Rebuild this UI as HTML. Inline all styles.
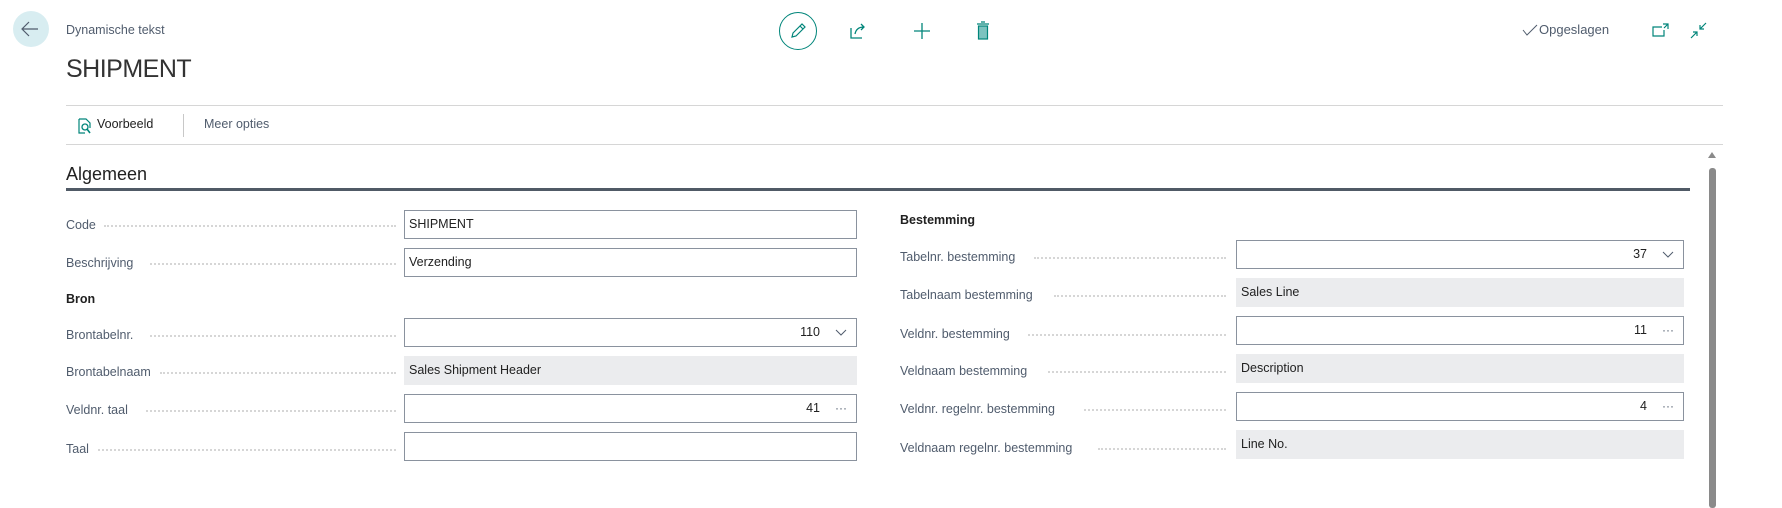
<!DOCTYPE html>
<html><head><meta charset="utf-8"><style>
*{box-sizing:border-box;margin:0;padding:0}
body{width:1782px;height:503px;background:#fff;font-family:"Segoe UI","Liberation Sans",sans-serif;color:#212121;position:relative;overflow:hidden}
.a{position:absolute;white-space:nowrap}
.lbl{font-size:12.5px;color:#505c6d;line-height:16px}
.dots{position:absolute;border-top:2px dotted #d6d6d6;height:0}
.box{position:absolute;height:29px;border:1px solid #8a929e;background:#fff;font-size:12.5px;line-height:27px;padding:0 4px;color:#212121}
.ro{position:absolute;height:29px;background:#ebecee;font-size:12.5px;line-height:29px;padding:0 5px;color:#212121}
.r{text-align:right;padding-right:36px}
.sfx{position:absolute;right:9px;top:0;color:#505c6d;font-size:12px}
</style></head><body>
<div class="a" style="left:13px;top:11px;width:36px;height:36px;border-radius:50%;background:#d8edf1"></div>
<svg class="a" style="left:21px;top:21px" width="18" height="16" viewBox="0 0 18 16"><path d="M17 8H2M8 1L1 8l7 7" fill="none" stroke="#505c6d" stroke-width="1.2"/></svg>
<div class="a" style="left:66px;top:23px;font-size:12.5px;color:#505c6d">Dynamische tekst</div>
<div class="a" style="left:66px;top:55px;font-size:25px;font-weight:300;color:#333;letter-spacing:-0.5px">SHIPMENT</div>

<div class="a" style="left:779px;top:12px;width:38px;height:38px;border-radius:50%;border:1.3px solid #00857a"></div>
<svg class="a" style="left:788px;top:21px" width="20" height="20" viewBox="0 0 20 20"><path d="M4 16l1-4 9-9 3 3-9 9z M12 5l3 3" fill="none" stroke="#00857a" stroke-width="1.2"/></svg>
<svg class="a" style="left:850px;top:23px" width="18" height="16" viewBox="0 0 18 16"><path d="M1 5v10h11 M5 11c1-5 4-7 9-7M11 1l3 3-3 3" fill="none" stroke="#00857a" stroke-width="1.3"/></svg>
<svg class="a" style="left:913px;top:22px" width="18" height="18" viewBox="0 0 18 18"><path d="M9 1v16M1 9h16" stroke="#00857a" stroke-width="1.3"/></svg>
<svg class="a" style="left:976px;top:21px" width="14" height="20" viewBox="0 0 14 20"><path d="M5 1h4M1 3h12" stroke="#00857a" stroke-width="1.3"/><rect x="2.5" y="5" width="9" height="13" fill="#7cc3bf" stroke="#00857a" stroke-width="1.2"/></svg>

<svg class="a" style="left:1522px;top:24px" width="16" height="12" viewBox="0 0 16 12"><path d="M1 6l4 5L15 1" fill="none" stroke="#505c6d" stroke-width="1"/></svg>
<div class="a" style="left:1539px;top:22px;font-size:13px;color:#505c6d">Opgeslagen</div>
<svg class="a" style="left:1652px;top:23px" width="17" height="14" viewBox="0 0 17 14"><path d="M10 4H1v9h11V7 M11 1h5v5M16 1l-4 4" fill="none" stroke="#00857a" stroke-width="1.2"/></svg>
<svg class="a" style="left:1690px;top:22px" width="17" height="17" viewBox="0 0 17 17"><path d="M16 1l-6 6M10 3v4h4M1 16l6-6M3 10h4v4" fill="none" stroke="#00857a" stroke-width="1.2"/></svg>

<div class="a" style="left:66px;top:105px;width:1657px;height:1px;background:#d6d6d6"></div>
<svg class="a" style="left:78px;top:118px" width="14" height="17" viewBox="0 0 14 17"><path d="M1 1h7l4 4v5M1 1v14h6" fill="none" stroke="#00857a" stroke-width="1.2"/><circle cx="7" cy="9" r="3" fill="none" stroke="#00857a" stroke-width="1.3"/><path d="M9 11l3 4" stroke="#00857a" stroke-width="1.6"/></svg>
<div class="a" style="left:97px;top:117px;font-size:12.5px;color:#212121">Voorbeeld</div>
<div class="a" style="left:183px;top:114px;width:1px;height:23px;background:#c8c8c8"></div>
<div class="a" style="left:204px;top:117px;font-size:12.5px;color:#505c6d">Meer opties</div>
<div class="a" style="left:66px;top:144px;width:1657px;height:1px;background:#d6d6d6"></div>

<div class="a" style="left:66px;top:164px;font-size:18px;color:#212121">Algemeen</div>
<div class="a" style="left:66px;top:188px;width:1624px;height:3px;background:#505a66"></div>

<svg class="a" style="left:1707px;top:151px" width="10" height="8" viewBox="0 0 10 8"><path d="M5 1L9 7H1z" fill="#8a8a8a"/></svg>
<div class="a" style="left:1709px;top:168px;width:7px;height:340px;background:#8a8a8a;border-radius:3px"></div>

<!-- left -->
<div class="a lbl" style="left:66px;top:217px">Code</div><div class="dots" style="left:104px;right:1386px;top:225px"></div>
<div class="box" style="left:404px;top:210px;width:453px">SHIPMENT</div>
<div class="a lbl" style="left:66px;top:255px">Beschrijving</div><div class="dots" style="left:150px;right:1386px;top:263px"></div>
<div class="box" style="left:404px;top:248px;width:453px">Verzending</div>
<div class="a" style="left:66px;top:292px;font-size:12.5px;font-weight:bold;color:#212121">Bron</div>
<div class="a lbl" style="left:66px;top:327px">Brontabelnr.</div><div class="dots" style="left:150px;right:1386px;top:335px"></div>
<div class="box r" style="left:404px;top:318px;width:453px">110<svg class="sfx" style="top:10px" width="12" height="8" viewBox="0 0 12 8"><path d="M1 1l5 5 5-5" fill="none" stroke="#505c6d"/></svg></div>
<div class="a lbl" style="left:66px;top:364px">Brontabelnaam</div><div class="dots" style="left:160px;right:1386px;top:372px"></div>
<div class="ro" style="left:404px;top:356px;width:453px">Sales Shipment Header</div>
<div class="a lbl" style="left:66px;top:402px">Veldnr. taal</div><div class="dots" style="left:146px;right:1386px;top:410px"></div>
<div class="box r" style="left:404px;top:394px;width:453px">41<span class="sfx">···</span></div>
<div class="a lbl" style="left:66px;top:441px">Taal</div><div class="dots" style="left:98px;right:1386px;top:449px"></div>
<div class="box" style="left:404px;top:432px;width:453px"></div>

<!-- right -->
<div class="a" style="left:900px;top:213px;font-size:12.5px;font-weight:bold;color:#212121">Bestemming</div>
<div class="a lbl" style="left:900px;top:249px">Tabelnr. bestemming</div><div class="dots" style="left:1034px;right:556px;top:257px"></div>
<div class="box r" style="left:1236px;top:240px;width:448px">37<svg class="sfx" style="top:10px" width="12" height="8" viewBox="0 0 12 8"><path d="M1 1l5 5 5-5" fill="none" stroke="#505c6d"/></svg></div>
<div class="a lbl" style="left:900px;top:287px">Tabelnaam bestemming</div><div class="dots" style="left:1054px;right:556px;top:295px"></div>
<div class="ro" style="left:1236px;top:278px;width:448px">Sales Line</div>
<div class="a lbl" style="left:900px;top:326px">Veldnr. bestemming</div><div class="dots" style="left:1028px;right:556px;top:334px"></div>
<div class="box r" style="left:1236px;top:316px;width:448px">11<span class="sfx">···</span></div>
<div class="a lbl" style="left:900px;top:363px">Veldnaam bestemming</div><div class="dots" style="left:1048px;right:556px;top:371px"></div>
<div class="ro" style="left:1236px;top:354px;width:448px">Description</div>
<div class="a lbl" style="left:900px;top:401px">Veldnr. regelnr. bestemming</div><div class="dots" style="left:1084px;right:556px;top:409px"></div>
<div class="box r" style="left:1236px;top:392px;width:448px">4<span class="sfx">···</span></div>
<div class="a lbl" style="left:900px;top:440px">Veldnaam regelnr. bestemming</div><div class="dots" style="left:1098px;right:556px;top:448px"></div>
<div class="ro" style="left:1236px;top:430px;width:448px">Line No.</div>
</body></html>
